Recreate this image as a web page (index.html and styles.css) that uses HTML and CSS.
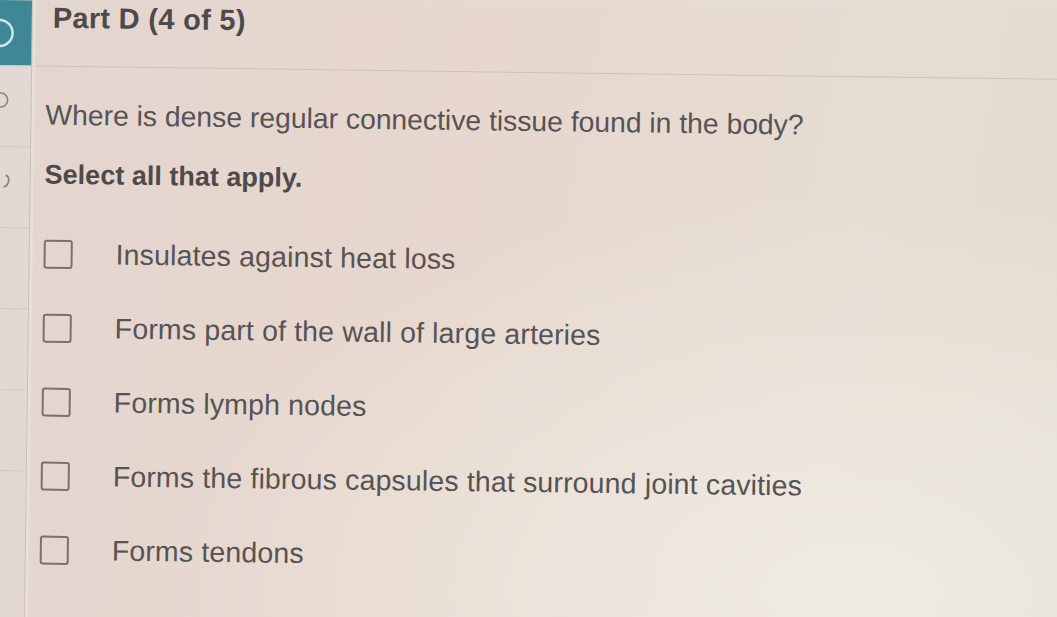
FILE: index.html
```html
<!DOCTYPE html>
<html>
<head>
<meta charset="utf-8">
<link rel="stylesheet" href="styles.css">
</head>
<body>
<div class="page">
  <aside class="rail">
    <div class="rail-top">
      <svg class="rail-logo" width="32" height="65" viewBox="0 0 32 65"><circle cx="0" cy="33" r="13" fill="none" stroke="#cfe6ee" stroke-width="2.5"/></svg>
    </div>
    <div class="rail-item"><svg width="14" height="20" viewBox="0 0 14 20"><circle cx="2" cy="10" r="7" fill="none" stroke="#8a8482" stroke-width="1.5"/></svg></div>
    <div class="rail-item"><svg width="14" height="20" viewBox="0 0 14 20"><path d="M8 4 Q12 6 11 10 Q10 15 6 16" fill="none" stroke="#8a8482" stroke-width="1.8"/></svg></div>
    <div class="rail-item"></div>
    <div class="rail-item"></div>
    <div class="rail-item"></div>
    <div class="rail-item last"></div>
  </aside>
  <main class="content">
    <header class="part-head">
      <h1 class="part-title">Part D (4 of 5)</h1>
    </header>
    <section class="question">
      <p class="q-text">Where is dense regular connective tissue found in the body?</p>
      <p class="q-instr">Select all that apply.</p>
      <ul class="options">
        <li class="option"><span class="box"></span><span class="label">Insulates against heat loss</span></li>
        <li class="option"><span class="box"></span><span class="label">Forms part of the wall of large arteries</span></li>
        <li class="option"><span class="box"></span><span class="label">Forms lymph nodes</span></li>
        <li class="option"><span class="box"></span><span class="label">Forms the fibrous capsules that surround joint cavities</span></li>
        <li class="option"><span class="box"></span><span class="label">Forms tendons</span></li>
      </ul>
    </section>
  </main>
</div>
</body>
</html>
```

FILE: styles.css
```css
html, body {
  margin: 0;
  padding: 0;
  width: 1057px;
  height: 617px;
  overflow: hidden;
}
body {
  background: linear-gradient(100deg, #e4d7cf 0%, #e6d8cf 35%, #e5ddd3 70%, #e3ddd2 100%);
  font-family: "Liberation Sans", Arial, sans-serif;
  color: #575354;
}
.page {
  display: flex;
  width: 1080px;
  height: 617px;
  transform: rotate(0.75deg);
  transform-origin: 0 0;
  background:
    radial-gradient(ellipse 720px 400px at 860px 580px, rgba(240,236,226,0.95), rgba(240,236,226,0) 100%),
    linear-gradient(100deg, #e3d6ce 0%, #e7d7ce 40%, #e6dcd2 75%, #e2dcd1 100%);
}
.rail {
  width: 32px;
  flex: none;
  display: flex;
  flex-direction: column;
  background: #e3d8d3;
  border-right: 1px solid #cbbfba;
  box-shadow: 3px 0 0 #e9dfda;
}
.rail-top {
  height: 65px;
  background: #3f8797;
}
.rail-logo { display: block; }
.rail-item {
  height: 80px;
  border-top: 1px solid #d4c8c3;
  display: flex;
  align-items: center;
}
.rail-item svg { display: block; margin-top: -12px; }
.content {
  flex: 1;
  padding-left: 4px;
}
.part-head {
  height: 65px;
  border-bottom: 1.5px solid #cdc3bb;
  padding-left: 16px;
}
.part-title {
  margin: 0;
  padding-top: 0;
  font-size: 29px;
  line-height: 34px;
  font-weight: bold;
  color: #4e4a4b;
  letter-spacing: 0.3px;
}
.question {
  padding-left: 10px;
}
.q-text {
  margin: 32px 0 0 0;
  font-size: 28.3px;
  line-height: 32px;
}
.q-instr {
  margin: 28px 0 0 0;
  font-size: 27px;
  line-height: 32px;
  font-weight: bold;
  color: #4e4a4b;
}
.options {
  list-style: none;
  margin: 49px 0 0 0;
  padding: 0;
}
.option {
  height: 74px;
  display: flex;
  align-items: flex-start;
}
.box {
  flex: none;
  width: 25px;
  height: 25px;
  border: 2px solid #767271;
  border-radius: 3px;
}
.label {
  margin-left: 43px;
  font-size: 28.5px;
  line-height: 29px;
  letter-spacing: 0.15px;
}
```
